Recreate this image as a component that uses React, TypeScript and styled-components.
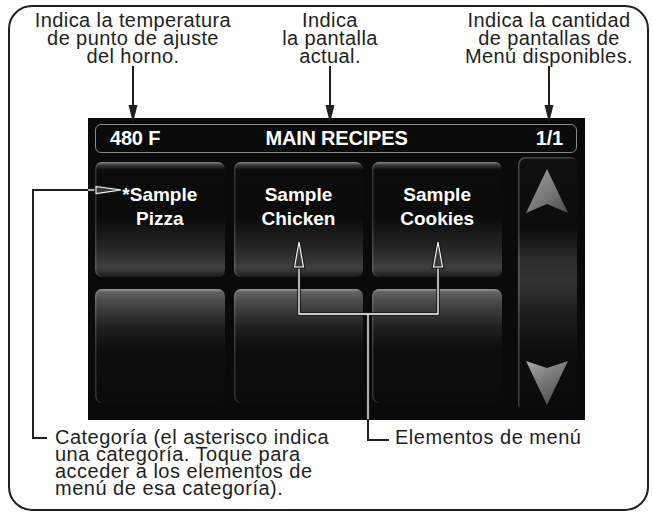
import React from 'react';
import styled, { createGlobalStyle } from 'styled-components';

const GlobalStyle = createGlobalStyle`
  html, body {
    margin: 0;
    padding: 0;
    background: #ffffff;
  }
  body {
    font-family: 'Liberation Sans', Arial, sans-serif;
    color: #231f20;
  }
`;

const INK = '#231f20';

const Page = styled.div`
  position: relative;
  width: 653px;
  height: 517px;
  padding: 5px 4px 0 8px;
  box-sizing: border-box;
`;

const Frame = styled.div`
  width: 641px;
  height: 506px;
  box-sizing: border-box;
  border: 2px solid ${INK};
  border-radius: 24px;
  padding-top: 4px;
  display: flex;
  flex-direction: column;
`;

const TopCaptions = styled.div`
  display: flex;
  height: 107px;
`;

const Caption = styled.p<{ $w: number; $ml: number }>`
  margin: 0 0 0 ${(p) => p.$ml}px;
  width: ${(p) => p.$w}px;
  flex: none;
  font-size: 20px;
  line-height: 18px;
  letter-spacing: 0.4px;
  text-align: center;
  white-space: nowrap;
`;

const Screen = styled.div`
  margin-left: 78px;
  width: 497px;
  height: 302px;
  box-sizing: border-box;
  padding: 6px 8px 0 7px;
  background: #0a0a0a;
`;

const Header = styled.div`
  height: 29px;
  box-sizing: border-box;
  border: 1.5px solid #8a8a8a;
  border-radius: 6px;
  display: grid;
  grid-template-columns: 1fr auto 1fr;
  align-items: center;
  padding: 0 13px 0 14px;
  color: #ffffff;
  font-weight: 700;
  font-size: 20px;
  letter-spacing: -0.2px;
`;

const HeaderCell = styled.span<{ $align: 'left' | 'center' | 'right' }>`
  text-align: ${(p) => p.$align};
`;

const Body = styled.div`
  display: flex;
  gap: 16px;
  margin-top: 4px;
`;

const ButtonGrid = styled.div`
  width: 407px;
  margin-top: 5px;
  display: grid;
  grid-template-columns: repeat(3, 1fr);
  grid-template-rows: 115px 114px;
  column-gap: 9px;
  row-gap: 12px;
`;

const MenuButton = styled.div<{ $row: 'upper' | 'lower' }>`
  border-radius: 7px;
  box-shadow: inset 1.5px 0 0 rgba(255, 255, 255, 0.16);
  background: ${(p) =>
    p.$row === 'upper'
      ? 'linear-gradient(180deg, #8a8a8a 0px, #3a3a3a 3px, #0c0c0c 8px, #0b0b0b 48%, #262626 75%, #404040 92%, #1c1c1c 100%)'
      : 'linear-gradient(180deg, #9a9a9a 0px, #626262 3px, #4c4c4c 10%, #222222 32%, #0e0e0e 52%, #0b0b0b 100%)'};
  color: #ffffff;
  font-weight: 700;
  font-size: 19px;
  line-height: 24px;
  text-align: center;
  padding-top: 21px;
  box-sizing: border-box;
`;

const ScrollBar = styled.div`
  width: 59px;
  height: 251px;
  box-sizing: border-box;
  border-radius: 7px 7px 4px 4px;
  box-shadow: inset 1.5px 1.5px 0 rgba(255, 255, 255, 0.22);
  background: linear-gradient(
    180deg,
    #101010 0%,
    #0c0c0c 28%,
    #2e2e2e 42%,
    #333333 50%,
    #1e1e1e 62%,
    #0d0d0d 78%,
    #0b0b0b 100%
  );
  display: flex;
  flex-direction: column;
  justify-content: space-between;
  padding: 11px 0 2px 7px;
`;

const BottomRow = styled.div`
  display: flex;
  margin-top: 9px;
  padding-left: 45px;
`;

const Note = styled.p<{ $w: number }>`
  margin: 0;
  width: ${(p) => p.$w}px;
  flex: none;
  font-size: 20px;
  line-height: 17px;
  letter-spacing: 0.5px;
  white-space: nowrap;
`;

const Overlay = styled.svg`
  position: absolute;
  left: 0;
  top: 0;
  width: 653px;
  height: 517px;
  pointer-events: none;
`;

const ArrowUp = () => (
  <svg width="44" height="46" viewBox="0 0 44 46">
    <defs>
      <linearGradient id="upShade" x1="0" y1="0" x2="1" y2="1">
        <stop offset="0" stopColor="#a8a8a8" />
        <stop offset="1" stopColor="#4e4e4e" />
      </linearGradient>
    </defs>
    <polygon points="22,1 43,45 22,36 1,45" fill="url(#upShade)" />
  </svg>
);

const ArrowDown = () => (
  <svg width="44" height="46" viewBox="0 0 44 46">
    <defs>
      <linearGradient id="downShade" x1="0" y1="0" x2="0.6" y2="1">
        <stop offset="0" stopColor="#a6a6a6" />
        <stop offset="1" stopColor="#505050" />
      </linearGradient>
    </defs>
    <polygon points="1,1 22,8 43,1 22,45" fill="url(#downShade)" />
  </svg>
);

// leader line drawn over the dark screen: white core, dark edge
const ScreenLine = ({ d }: { d: string }) => (
  <g fill="none" strokeLinejoin="miter">
    <path d={d} stroke="#1a1a1a" strokeWidth={3.6} />
    <path d={d} stroke="#ffffff" strokeWidth={1.3} />
  </g>
);

const ScreenHead = ({ points }: { points: string }) => (
  <g>
    <polygon points={points} fill="#1a1a1a" stroke="#1a1a1a" strokeWidth={3.4} />
    <polygon points={points} fill="#3a3a3a" stroke="#ffffff" strokeWidth={1.1} />
  </g>
);

const Leaders = () => (
  <Overlay viewBox="0 0 653 517">
    {[133, 330, 549].map((x) => (
      <g key={x}>
        <line x1={x} y1={66} x2={x} y2={108} stroke={INK} strokeWidth={2} />
        <polygon points={`${x - 4.5},105 ${x + 4.5},105 ${x},123`} fill={INK} />
      </g>
    ))}

    <path d="M47 438 H33 V190 H89" fill="none" stroke={INK} strokeWidth={2} />
    <ScreenLine d="M88 190 H97" />
    <ScreenHead points="96,186.5 121,190 96,193.5" />

    <ScreenLine d="M299 266 V314 H438 V266 M368 314 V420" />
    <ScreenHead points="294.5,267 299,242 303.5,267" />
    <ScreenHead points="433.5,267 438,242 442.5,267" />
    <path d="M368 419 V440 H389" fill="none" stroke={INK} strokeWidth={2} />
  </Overlay>
);

const recipes = [
  ['*Sample', 'Pizza'],
  ['Sample', 'Chicken'],
  ['Sample', 'Cookies'],
];

export default function App() {
  return (
    <>
      <GlobalStyle />
      <Page>
        <Frame>
          <TopCaptions>
            <Caption $w={200} $ml={23}>
              Indica la temperatura
              <br />
              de punto de ajuste
              <br />
              del horno.
            </Caption>
            <Caption $w={120} $ml={37}>
              Indica
              <br />
              la pantalla
              <br />
              actual.
            </Caption>
            <Caption $w={190} $ml={64}>
              Indica la cantidad
              <br />
              de pantallas de
              <br />
              Menú disponibles.
            </Caption>
          </TopCaptions>

          <Screen>
            <Header>
              <HeaderCell $align="left">480 F</HeaderCell>
              <HeaderCell $align="center">MAIN RECIPES</HeaderCell>
              <HeaderCell $align="right">1/1</HeaderCell>
            </Header>
            <Body>
              <ButtonGrid>
                {recipes.map(([a, b]) => (
                  <MenuButton key={b} $row="upper">
                    {a}
                    <br />
                    {b}
                  </MenuButton>
                ))}
                <MenuButton $row="lower" />
                <MenuButton $row="lower" />
                <MenuButton $row="lower" />
              </ButtonGrid>
              <ScrollBar>
                <ArrowUp />
                <ArrowDown />
              </ScrollBar>
            </Body>
          </Screen>

          <BottomRow>
            <Note $w={340}>
              Categoría (el asterisco indica
              <br />
              una categoría. Toque para
              <br />
              acceder a los elementos de
              <br />
              menú de esa categoría).
            </Note>
            <Note $w={200}>Elementos de menú</Note>
          </BottomRow>
        </Frame>
        <Leaders />
      </Page>
    </>
  );
}
